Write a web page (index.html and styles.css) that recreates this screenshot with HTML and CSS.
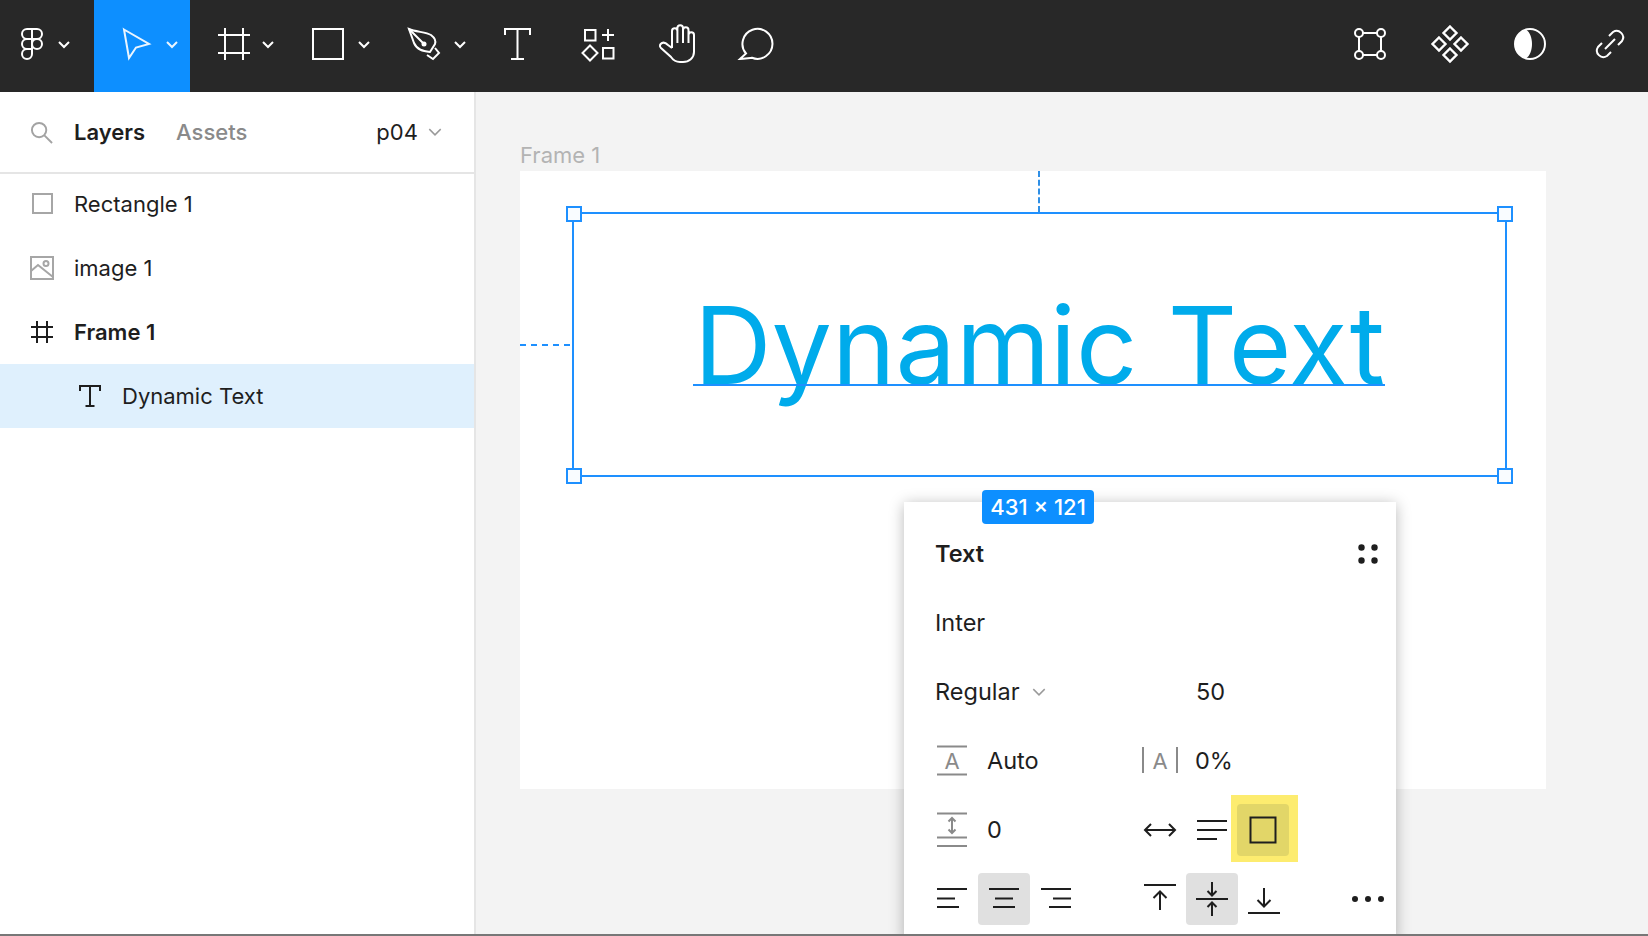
FILE: index.html
```html
<!DOCTYPE html>
<html lang="en">
<head>
    <meta charset="UTF-8">
    <meta name="viewport" content="width=device-width, initial-scale=1.0">
    <title>Figma - Dynamic Text</title>
    <link rel="stylesheet" href="styles.css">
</head>
<body>
    <div class="app">
        <header class="toolbar">
            <div class="tool tool-logo">
                <svg class="logo" viewBox="0 0 22 32">
                    <path d="M11 1H6a5 5 0 0 0 0 10h5zM11 1h5a5 5 0 0 1 0 10h-5zM11 11H6a5 5 0 0 0 0 10h5zM11 21H6a5 5 0 1 0 5 5z"/>
                    <circle cx="16" cy="16" r="5"/>
                </svg>
                <svg class="chevron" viewBox="0 0 12 7"><path d="M1 1l5 5 5-5"/></svg>
            </div>
            <div class="tool tool-active">
                <svg class="icon" viewBox="0 0 36 36"><path d="M4 3.500L29 18l-13 3.500-7 10.500z"/></svg>
                <svg class="chevron" viewBox="0 0 12 7"><path d="M1 1l5 5 5-5"/></svg>
            </div>
            <div class="tool">
                <svg class="icon" viewBox="0 0 36 36"><path d="M9 2v32M27 2v32M2 9h32M2 27h32"/></svg>
                <svg class="chevron" viewBox="0 0 12 7"><path d="M1 1l5 5 5-5"/></svg>
            </div>
            <div class="tool">
                <svg class="icon" viewBox="0 0 36 36"><rect x="1" y="3" width="30" height="30"/></svg>
                <svg class="chevron" viewBox="0 0 12 7"><path d="M1 1l5 5 5-5"/></svg>
            </div>
            <div class="tool">
                <svg class="icon" viewBox="0 0 36 36">
                    <path d="M1 3C8 6 18 6 23 9C27 12 28 15 27 18L22 26C15 25 9 24 6 17z"/>
                    <path d="M1 3l15 15M27 22l4 5-6 6-6-4"/>
                    <circle class="solid" cx="16" cy="18" r="2.500"/>
                </svg>
                <svg class="chevron" viewBox="0 0 12 7"><path d="M1 1l5 5 5-5"/></svg>
            </div>
            <div class="tool-plain">
                <svg class="icon" viewBox="0 0 36 36"><path d="M5 9V3h25v6M17.500 3v30M11 33h13"/></svg>
            </div>
            <div class="tool-plain">
                <svg class="icon" viewBox="0 0 36 36">
                    <rect x="5" y="4" width="10.500" height="10.500"/>
                    <path d="M22 9h12M28 3v12M10 19.500l7.500 7.500-7.500 7.500-7.500-7.500z"/>
                    <rect x="23" y="22" width="10.500" height="10.500"/>
                </svg>
            </div>
            <div class="tool-plain">
                <svg class="icon-wide" viewBox="0 0 40 40">
                    <path d="M14 24V7a2.700 2.700 0 0 1 5.400 0V19V4a2.700 2.700 0 0 1 5.600 0V19V6a2.700 2.700 0 0 1 5.500 0V19V11a2.700 2.700 0 0 1 5.500 0V28C36 34 31 38 25 38H22C18 38 15 36 13 33L3 24C1 22 2 20 4 19C6 18 8 19 10 21L14 24"/>
                </svg>
            </div>
            <div class="tool-plain">
                <svg class="icon-wide" viewBox="0 0 40 40"><path d="M2 35L8 29.500A15 15 0 1 1 14 33.800C11 34 6 35 2 35z"/></svg>
            </div>

            <div class="toolbar-right">
                <div class="tool-plain">
                    <svg class="icon-wide" viewBox="0 0 40 40">
                        <path d="M13 9h14M13 31h14M9 13v14M31 13v14"/>
                        <circle cx="9" cy="9" r="4"/><circle cx="31" cy="9" r="4"/>
                        <circle cx="9" cy="31" r="4"/><circle cx="31" cy="31" r="4"/>
                    </svg>
                </div>
                <div class="tool-plain">
                    <svg class="icon-wide icon-bold" viewBox="0 0 40 40">
                        <path d="M20 2.500l6.500 6.500-6.500 6.500-6.500-6.500zM9 13.500l6.500 6.500-6.500 6.500-6.500-6.500zM31 13.500l6.500 6.500-6.500 6.500-6.500-6.500zM20 24.500l6.500 6.500-6.500 6.500-6.500-6.500z"/>
                    </svg>
                </div>
                <div class="tool-plain">
                    <svg class="icon-wide" viewBox="0 0 40 40">
                        <circle cx="20" cy="20" r="15"/>
                        <path class="solid" d="M16 5.500A15 15 0 0 0 16 34.500C24 29 24 11 16 5.500z"/>
                    </svg>
                </div>
                <div class="tool-plain">
                    <svg class="icon-wide" viewBox="0 0 40 40">
                        <path d="M15 25L25 15M19 12L23 8A6.500 6.500 0 0 1 32 17L28 21M12 19L8 23A6.500 6.500 0 0 0 17 32L21 28"/>
                    </svg>
                </div>
            </div>
        </header>

        <div class="workspace">
            <aside class="sidebar">
                <div class="side-head">
                    <svg class="search" viewBox="0 0 24 24"><circle cx="9.500" cy="9.500" r="7.500"/><path d="M15 15l8 8"/></svg>
                    <span class="tab tab-on">Layers</span>
                    <span class="tab">Assets</span>
                    <span class="page">p04</span>
                    <svg class="chevron chevron-grey" viewBox="0 0 12 7"><path d="M1 1l5 5 5-5"/></svg>
                </div>
                <ul class="layers">
                    <li class="layer">
                        <svg class="layer-icon" viewBox="0 0 24 24"><rect x="3" y="2" width="19" height="19"/></svg>
                        Rectangle 1
                    </li>
                    <li class="layer">
                        <svg class="layer-icon" viewBox="0 0 24 24">
                            <rect x="1" y="1" width="22" height="22"/>
                            <path d="M1 15l7-6 15 12"/>
                            <circle cx="16" cy="7.500" r="2.500"/>
                        </svg>
                        image 1
                    </li>
                    <li class="layer layer-bold">
                        <svg class="layer-icon layer-icon-dark" viewBox="0 0 24 24"><path d="M7 1v22M17 1v22M1 7h22M1 17h22"/></svg>
                        Frame 1
                    </li>
                    <li class="layer layer-child">
                        <svg class="layer-icon layer-icon-dark" viewBox="0 0 24 24"><path d="M2 7V2h20v5M12 2v20M7.500 22h9"/></svg>
                        Dynamic Text
                    </li>
                </ul>
            </aside>

            <main class="canvas">
                <div class="frame-label">Frame 1</div>
                <div class="frame">
                    <div class="guide-v"></div>
                    <div class="guide-h"></div>
                    <div class="selection">
                        <span class="handle handle-tl"></span>
                        <span class="handle handle-tr"></span>
                        <span class="handle handle-bl"></span>
                        <span class="handle handle-br"></span>
                        <div class="dynamic">Dynamic Text</div>
                        <div class="baseline"></div>
                        <div class="size-badge">431 × 121</div>
                    </div>
                </div>

                <section class="panel">
                    <div class="row">
                        <div class="label label-title">Text</div>
                        <div class="cell cell-last">
                            <svg class="p-icon" viewBox="0 0 36 36">
                                <circle class="dot" cx="11.500" cy="11.500" r="3.200"/><circle class="dot" cx="24.500" cy="11.500" r="3.200"/>
                                <circle class="dot" cx="11.500" cy="24.500" r="3.200"/><circle class="dot" cx="24.500" cy="24.500" r="3.200"/>
                            </svg>
                        </div>
                    </div>
                    <div class="row">
                        <div class="label">Inter</div>
                    </div>
                    <div class="row">
                        <div class="label label-select">
                            Regular
                            <svg class="chevron chevron-grey" viewBox="0 0 12 7"><path d="M1 1l5 5 5-5"/></svg>
                        </div>
                        <div class="value value-size">50</div>
                    </div>
                    <div class="row">
                        <div class="cell">
                            <svg class="p-icon grey" viewBox="0 0 36 36">
                                <path d="M3 3.500h30M3 31.500h30"/>
                                <text x="18" y="25.500" text-anchor="middle" class="icon-text">A</text>
                            </svg>
                        </div>
                        <div class="value">Auto</div>
                        <div class="cell cell-second">
                            <svg class="p-icon grey" viewBox="0 0 36 36">
                                <path d="M1 4v26M35 4v26"/>
                                <text x="18" y="25.500" text-anchor="middle" class="icon-text">A</text>
                            </svg>
                        </div>
                        <div class="value">0%</div>
                    </div>
                    <div class="row">
                        <div class="cell">
                            <svg class="p-icon grey" viewBox="0 0 36 36">
                                <path d="M3 1.500h30M3 25.500h30M3 34h30M18 6v15M14.500 9.500L18 6l3.500 3.500M14.500 17.500L18 21l3.500-3.500"/>
                            </svg>
                        </div>
                        <div class="value">0</div>
                        <div class="cell cell-second">
                            <svg class="p-icon" viewBox="0 0 36 36"><path d="M3 18h30M9 12l-6 6 6 6M27 12l6 6-6 6"/></svg>
                        </div>
                        <div class="cell">
                            <svg class="p-icon" viewBox="0 0 36 36"><path d="M3 9h30M3 18h30M3 27h20"/></svg>
                        </div>
                        <div class="cell cell-marked">
                            <svg class="p-icon" viewBox="0 0 36 36"><rect x="5.500" y="5.500" width="25" height="25"/></svg>
                        </div>
                    </div>
                    <div class="row">
                        <div class="cell">
                            <svg class="p-icon" viewBox="0 0 36 36"><path d="M3 8h30M3 17.500h18M3 26h22"/></svg>
                        </div>
                        <div class="cell cell-on">
                            <svg class="p-icon" viewBox="0 0 36 36"><path d="M3 8h30M9 17.500h18M7 26h22"/></svg>
                        </div>
                        <div class="cell">
                            <svg class="p-icon" viewBox="0 0 36 36"><path d="M3 8h30M15 17.500h18M11 26h22"/></svg>
                        </div>
                        <div class="cell cell-second">
                            <svg class="p-icon" viewBox="0 0 36 36"><path d="M2 4h32M18 11v18M11.500 17L18 10.500l6.500 6.500"/></svg>
                        </div>
                        <div class="cell cell-on">
                            <svg class="p-icon" viewBox="0 0 36 36"><path d="M2 18h32M18 1v13M13.500 10l4.500 4.500 4.500-4.500M18 22v13M13.500 26l4.500-4.500 4.500 4.500"/></svg>
                        </div>
                        <div class="cell">
                            <svg class="p-icon" viewBox="0 0 36 36"><path d="M2 32h32M18 7v18M11.500 19l6.500 6.500 6.500-6.500"/></svg>
                        </div>
                        <div class="cell cell-last">
                            <svg class="p-icon" viewBox="0 0 36 36">
                                <circle class="dot" cx="5" cy="18" r="3"/><circle class="dot" cx="18" cy="18" r="3"/><circle class="dot" cx="31" cy="18" r="3"/>
                            </svg>
                        </div>
                    </div>
                </section>
            </main>
        </div>
    </div>
</body>
</html>
```

FILE: styles.css
```css
* {
    box-sizing: border-box;
}

body {
    margin: 0;
    overflow: hidden;
    font-family: Inter, "Noto Sans", sans-serif;
    font-size: 22px;
    color: #1e1e1e;
    background-color: #fff;
}

svg {
    display: block;
    flex: none;
    fill: none;
    stroke: currentColor;
    stroke-width: 2;
    overflow: visible;
}

.app {
    height: 936px;
    display: flex;
    flex-direction: column;
    border-bottom: 2px solid #777;
}

/* Toolbar */
.toolbar {
    flex: none;
    height: 92px;
    display: flex;
    background-color: #282828;
    color: #fff;
    overflow: hidden;
}

.tool {
    width: 96px;
    padding: 0 0 4px 26px;
    display: flex;
    align-items: center;
    gap: 10px;
}

.tool-logo {
    width: 94px;
    padding-left: 21px;
    gap: 15px;
}

.tool-active {
    background-color: #0d8fff;
    color: #eaf5ff;
}

.tool-plain {
    width: 80px;
    padding-bottom: 4px;
    display: flex;
    align-items: center;
    justify-content: center;
}

.toolbar-right {
    margin-left: auto;
    margin-right: -2px;
    display: flex;
}

.logo {
    width: 22px;
    height: 32px;
}

.icon {
    width: 36px;
    height: 36px;
}

.icon-wide {
    width: 40px;
    height: 40px;
}

.icon-bold {
    stroke-width: 2.400;
}

.solid {
    fill: currentColor;
    stroke: none;
}

.chevron {
    width: 12px;
    height: 7px;
}

.chevron-grey {
    width: 14px;
    height: 8px;
    color: #9a9a9a;
    stroke-width: 1.300;
}

/* Left sidebar */
.workspace {
    flex: 1;
    display: flex;
    min-height: 0;
}

.sidebar {
    flex: none;
    width: 476px;
    border-right: 2px solid #e5e5e5;
}

.side-head {
    height: 80px;
    padding-left: 30px;
    display: flex;
    align-items: center;
    box-shadow: 0 2px 0 #e5e5e5;
}

.search {
    width: 23px;
    height: 23px;
    margin-right: 21px;
    color: #a3a3a3;
}

.tab {
    margin-right: 31px;
    font-weight: 500;
    color: #8a8a8a;
}

.tab-on {
    font-weight: 600;
    color: #1e1e1e;
}

.page {
    margin-left: 98px;
    margin-right: 10px;
}

.layers {
    margin: 0;
    padding: 0;
    list-style: none;
}

.layer {
    height: 64px;
    padding-left: 30px;
    display: flex;
    align-items: center;
    gap: 20px;
}

.layer-bold {
    font-weight: 600;
}

.layer-child {
    padding-left: 78px;
    background-color: #dff0fd;
}

.layer-icon {
    width: 24px;
    height: 24px;
    color: #a6a6a6;
}

.layer-icon-dark {
    color: #1e1e1e;
}

/* Canvas */
.canvas {
    flex: 1;
    position: relative;
    overflow: hidden;
    background-color: #f3f3f3;
}

.frame-label {
    position: absolute;
    left: 44px;
    top: 50px;
    color: #b3b3b3;
}

.frame {
    position: absolute;
    left: 44px;
    top: 79px;
    width: 1026px;
    height: 618px;
    background-color: #fff;
}

.guide-v {
    position: absolute;
    left: 518px;
    top: 0;
    height: 41px;
    border-left: 2px dashed #2f8fe6;
}

.guide-h {
    position: absolute;
    left: 0;
    top: 173px;
    width: 50px;
    border-top: 2px dashed #1e90ff;
}

.selection {
    position: absolute;
    left: 52px;
    top: 41px;
    width: 935px;
    height: 265px;
    border: 2px solid #1e90ff;
}

.handle {
    position: absolute;
    width: 16px;
    height: 16px;
    border: 2px solid #1e90ff;
    background-color: #f9fcff;
}

.handle-tl { left: -8px; top: -8px; }
.handle-tr { right: -8px; top: -8px; }
.handle-bl { left: -8px; bottom: -9px; }
.handle-br { right: -8px; bottom: -9px; }

.dynamic {
    position: absolute;
    left: 0;
    right: 0;
    top: 66px;
    text-align: center;
    font-size: 107.500px;
    line-height: 131px;
    color: #00abeb;
    white-space: nowrap;
}

.baseline {
    position: absolute;
    left: 119px;
    top: 170px;
    width: 692px;
    height: 2px;
    background-color: #1e90ff;
}

.size-badge {
    position: absolute;
    left: 408px;
    top: 276px;
    z-index: 2;
    width: 112px;
    height: 34px;
    display: flex;
    align-items: center;
    justify-content: center;
    border-radius: 4px;
    background-color: #0d8fff;
    color: #fff;
    font-weight: 500;
}

/* Floating text panel */
.panel {
    position: absolute;
    left: 428px;
    top: 410px;
    z-index: 1;
    isolation: isolate;
    width: 492px;
    height: 440px;
    padding: 17px 0 0 22px;
    background-color: #fff;
    box-shadow: 0 2px 14px rgba(0, 0, 0, 0.28);
    font-size: 23.500px;
}

.row {
    height: 69.100px;
    display: grid;
    grid-template-columns: repeat(9, 52px);
    align-items: center;
}

.label {
    grid-column: 1 / span 4;
    padding-left: 9px;
}

.label-title {
    font-weight: 600;
}

.label-select {
    display: flex;
    align-items: center;
    gap: 12px;
}

.value {
    padding-left: 9px;
    white-space: nowrap;
}

.value-size {
    grid-column: 6;
    padding-left: 10px;
}

.cell {
    position: relative;
    width: 52px;
    height: 52px;
    display: flex;
    align-items: center;
    justify-content: center;
    border-radius: 4px;
    color: #1e1e1e;
}

.cell-second {
    grid-column: 5;
}

.cell-last {
    grid-column: 9;
}

.cell-on {
    background-color: #e0e0e0;
}

/* yellow note drawn around the clip-content button */
.cell-marked {
    margin-left: -1px;
    background-color: #e2d668;
}

.cell-marked::before {
    content: "";
    position: absolute;
    inset: -9px -9px -6px -6px;
    z-index: -1;
    background-color: #fdec6f;
}

.p-icon {
    width: 36px;
    height: 36px;
}

.grey {
    color: #8a8a8a;
}

.dot {
    fill: currentColor;
    stroke: none;
}

.icon-text {
    fill: currentColor;
    stroke: none;
    font-size: 22px;
}
```
